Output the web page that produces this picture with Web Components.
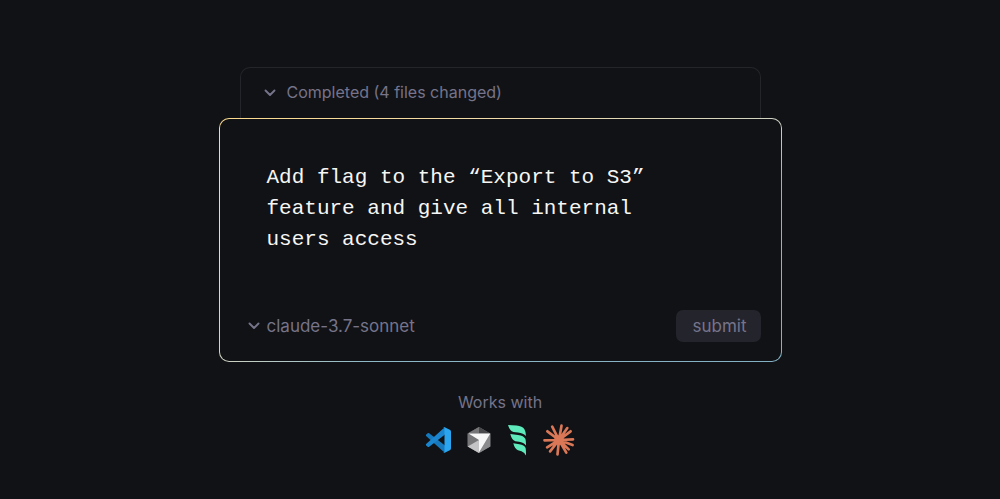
<!DOCTYPE html>
<html lang="en">
<head>
<meta charset="utf-8">
<meta name="viewport" content="width=device-width, initial-scale=1">
<title>Prompt</title>
<style>
:root {
  --bg: #111216;
  --line: #24252b;
  --muted: #75748a;
  --text: #f6f6f4;
  --button: #24242d;
  --sans: Inter, "Liberation Sans", sans-serif;
  --mono: "Liberation Mono", monospace;
}
body {
  margin: 0;
  background: var(--bg);
  color: var(--muted);
  font-family: var(--sans);
}
</style>
</head>
<body>
<prompt-demo>
  <status-bar slot="status">Completed (4 files changed)</status-bar>
  <prompt-card model="claude-3.7-sonnet" action="submit">Add flag to the “Export to S3” feature and give all internal users access</prompt-card>
  <works-with slot="footer" label="Works with">
    <tool-icon name="vscode"></tool-icon>
    <tool-icon name="cursor"></tool-icon>
    <tool-icon name="surf"></tool-icon>
    <tool-icon name="claude"></tool-icon>
  </works-with>
</prompt-demo>

<script>
const CHEVRON = `<svg class="chevron" width="12" height="8" viewBox="0 0 12 8" fill="none"
  stroke="currentColor" stroke-width="1.9" stroke-linecap="round" stroke-linejoin="round" aria-hidden="true">
  <path d="M1.500 1.500 6 6l4.500-4.500"/></svg>`;

// Page column: status strip, card, footer
class PromptDemo extends HTMLElement {
  constructor() {
    super();
    this.attachShadow({ mode: "open" }).innerHTML = `
<style>
:host { display: block; padding: 67px 16px 40px; }
main { max-width: 563px; margin: 0 auto; }
.status { padding: 0 21px; }
footer { padding-top: 28px; }
</style>
<main>
  <div class="status"><slot name="status"></slot></div>
  <slot></slot>
  <footer><slot name="footer"></slot></footer>
</main>`;
  }
}

class StatusBar extends HTMLElement {
  constructor() {
    super();
    this.attachShadow({ mode: "open" }).innerHTML = `
<style>
:host {
  display: block;
  border: 1px solid var(--line);
  border-bottom: 0;
  border-radius: 10px 10px 0 0;
}
button {
  display: flex;
  align-items: center;
  gap: 11px;
  width: 100%;
  height: 50px;
  padding: 0 23px 2px;
  border: 0;
  background: none;
  color: inherit;
  font: 16px/24px var(--sans);
  text-align: left;
}
.chevron { margin-top: 2px; }
</style>
<button type="button" aria-expanded="false">${CHEVRON}<span><slot></slot></span></button>`;
  }
}

// Text content is the prompt; model and action are attributes
class PromptCard extends HTMLElement {
  connectedCallback() {
    const root = this.attachShadow({ mode: "open" });
    root.innerHTML = `
<style>
:host {
  display: block;
  box-sizing: border-box;
  border: 1px solid transparent;
  border-radius: 10px;
  background:
    linear-gradient(var(--bg), var(--bg)) padding-box,
    linear-gradient(to bottom right, #fbda8c 0%, #f2dcaa 25%, #cfd3c2 50%, #8db8c6 63%, #83b0c2 100%) border-box;
}
form { display: flex; flex-direction: column; padding: 43px 20px 19px; }
textarea {
  display: block;
  box-sizing: border-box;
  width: 100%;
  max-width: 440px;
  height: 132px;
  margin: 0 0 16px;
  padding: 0 27px;
  border: 0;
  outline: 0;
  resize: none;
  overflow: hidden;
  background: none;
  color: var(--text);
  font: 21px/31px var(--mono);
}
.row { display: flex; align-items: center; justify-content: space-between; }
.model { display: grid; align-items: center; }
.model > * { grid-area: 1 / 1; }
.chevron { margin-left: 8px; }
select {
  appearance: none;
  padding: 0 0 0 27px;
  border: 0;
  background: none;
  color: var(--muted);
  font: 17px/24px var(--sans);
}
button {
  height: 32px;
  padding: 0 14px 0 16px;
  border: 0;
  border-radius: 7px;
  background: var(--button);
  color: var(--muted);
  font: 17px/24px var(--sans);
}
</style>
<form>
  <textarea aria-label="Prompt" spellcheck="false"></textarea>
  <div class="row">
    <div class="model">${CHEVRON}<select aria-label="Model"><option></option></select></div>
    <button type="button"></button>
  </div>
</form>`;
    root.querySelector("textarea").value = this.textContent.trim();
    root.querySelector("option").textContent = this.getAttribute("model");
    root.querySelector("button").textContent = this.getAttribute("action");
  }
}

class WorksWith extends HTMLElement {
  connectedCallback() {
    this.attachShadow({ mode: "open" }).innerHTML = `
<style>
:host { display: flex; flex-direction: column; align-items: center; gap: 10px; }
p { margin: 0; font: 16px/24px var(--sans); }
.icons { display: flex; align-items: center; gap: 16px; }
</style>
<p>${this.getAttribute("label")}</p>
<div class="icons"><slot></slot></div>`;
  }
}

const ray = (angle, length) => {
  const a = angle * Math.PI / 180;
  return `M16 16L${(16 + length * Math.cos(a)).toFixed(1)} ${(16 - length * Math.sin(a)).toFixed(1)}`;
};

const RAYS = [
  [3, 14], [37, 14.5], [55, 14.5], [80, 14.5], [117, 15], [143, 14.5],
  [181, 14.5], [212, 14], [232, 14.5], [264, 14.5], [300, 14.5], [316, 13.5], [340, 14.5],
];

const ICONS = {
  vscode: `<svg width="26" height="32" viewBox="0 0 26 32">
    <path fill="#1679bd" d="M1.200 10.500 3 9.100q.6-.4 1.200.1L20 21.500v6.300q-.8.500-1.700-.3L1.100 12q-.6-.8.1-1.500z"/>
    <path fill="#1b86cf" d="M1.200 21.500 3 22.900q.6.4 1.200-.1L20 10.500V4.200q-.8-.5-1.700.3L1.100 20q-.6.8.1 1.500z"/>
    <path fill="#2ba5ef" d="M19.200 3.100 24.800 5.800Q26 6.400 26 7.700v16.600q0 1.300-1.200 1.900l-5.600 2.700q-.8.300-1.500-.3 1.800.5 1.800-1.400V4.800q0-1.900-1.800-1.400.7-.6 1.500-.3z"/></svg>`,
  cursor: `<svg width="24" height="32" viewBox="0 0 24 32">
    <path fill="#77777a" d="M12 3 23.300 9.500v13L12 29 .7 22.500v-13z"/>
    <path fill="#4a4a4d" d="M12 3 23.300 9.500H.7z"/>
    <path fill="#77777a" d="M12 3v6.500H.7z"/>
    <path fill="#77777a" d="M.7 9.500 12 16v13L.7 22.500z"/>
    <path fill="#c4c4c6" d="M.7 22.500 12 16v13z"/>
    <path fill="#8b8b8e" d="M23.300 9.500v13L12 29z"/>
    <path fill="#f8f8f8" d="M1.500 9.500h21.800L12 28.500V16z"/></svg>`,
  surf: `<svg width="20" height="32" viewBox="0 0 20 32" fill="#5eeabb">
    <path d="M1 1l8.500.6q6 .6 7.900 3.700Q18.800 7.500 19 12q-2.500-3-8-3.600L6.500 8Q2.800 7 1 1z"/>
    <path d="M3.300 10l7.700.9q5.800.8 7.300 3.800.7 1.500.7 6.800-2.300-3.300-7-3.800l-3.700-.5Q4.800 16.200 3.300 10z"/>
    <path d="M6.300 19.300l6 1q5 1 6.200 3.400.5 1.200.5 7.800-1.200-2.800-4.500-4.300l-3.500-1Q7.600 24.800 6.300 19.300z"/></svg>`,
  claude: `<svg width="32" height="32" viewBox="0 0 32 32" fill="none" stroke="#d97757" stroke-width="2.700" stroke-linecap="round">
    <circle cx="16" cy="16" r="3.500" fill="#d97757"/>
    <path d="${RAYS.map(([a, l]) => ray(a, l)).join("")}"/></svg>`,
};

class ToolIcon extends HTMLElement {
  connectedCallback() {
    this.attachShadow({ mode: "open" }).innerHTML = `
<style>
:host { display: block; }
svg { display: block; }
</style>
${ICONS[this.getAttribute("name")]}`;
  }
}

customElements.define("prompt-demo", PromptDemo);
customElements.define("status-bar", StatusBar);
customElements.define("prompt-card", PromptCard);
customElements.define("works-with", WorksWith);
customElements.define("tool-icon", ToolIcon);
</script>
</body>
</html>
